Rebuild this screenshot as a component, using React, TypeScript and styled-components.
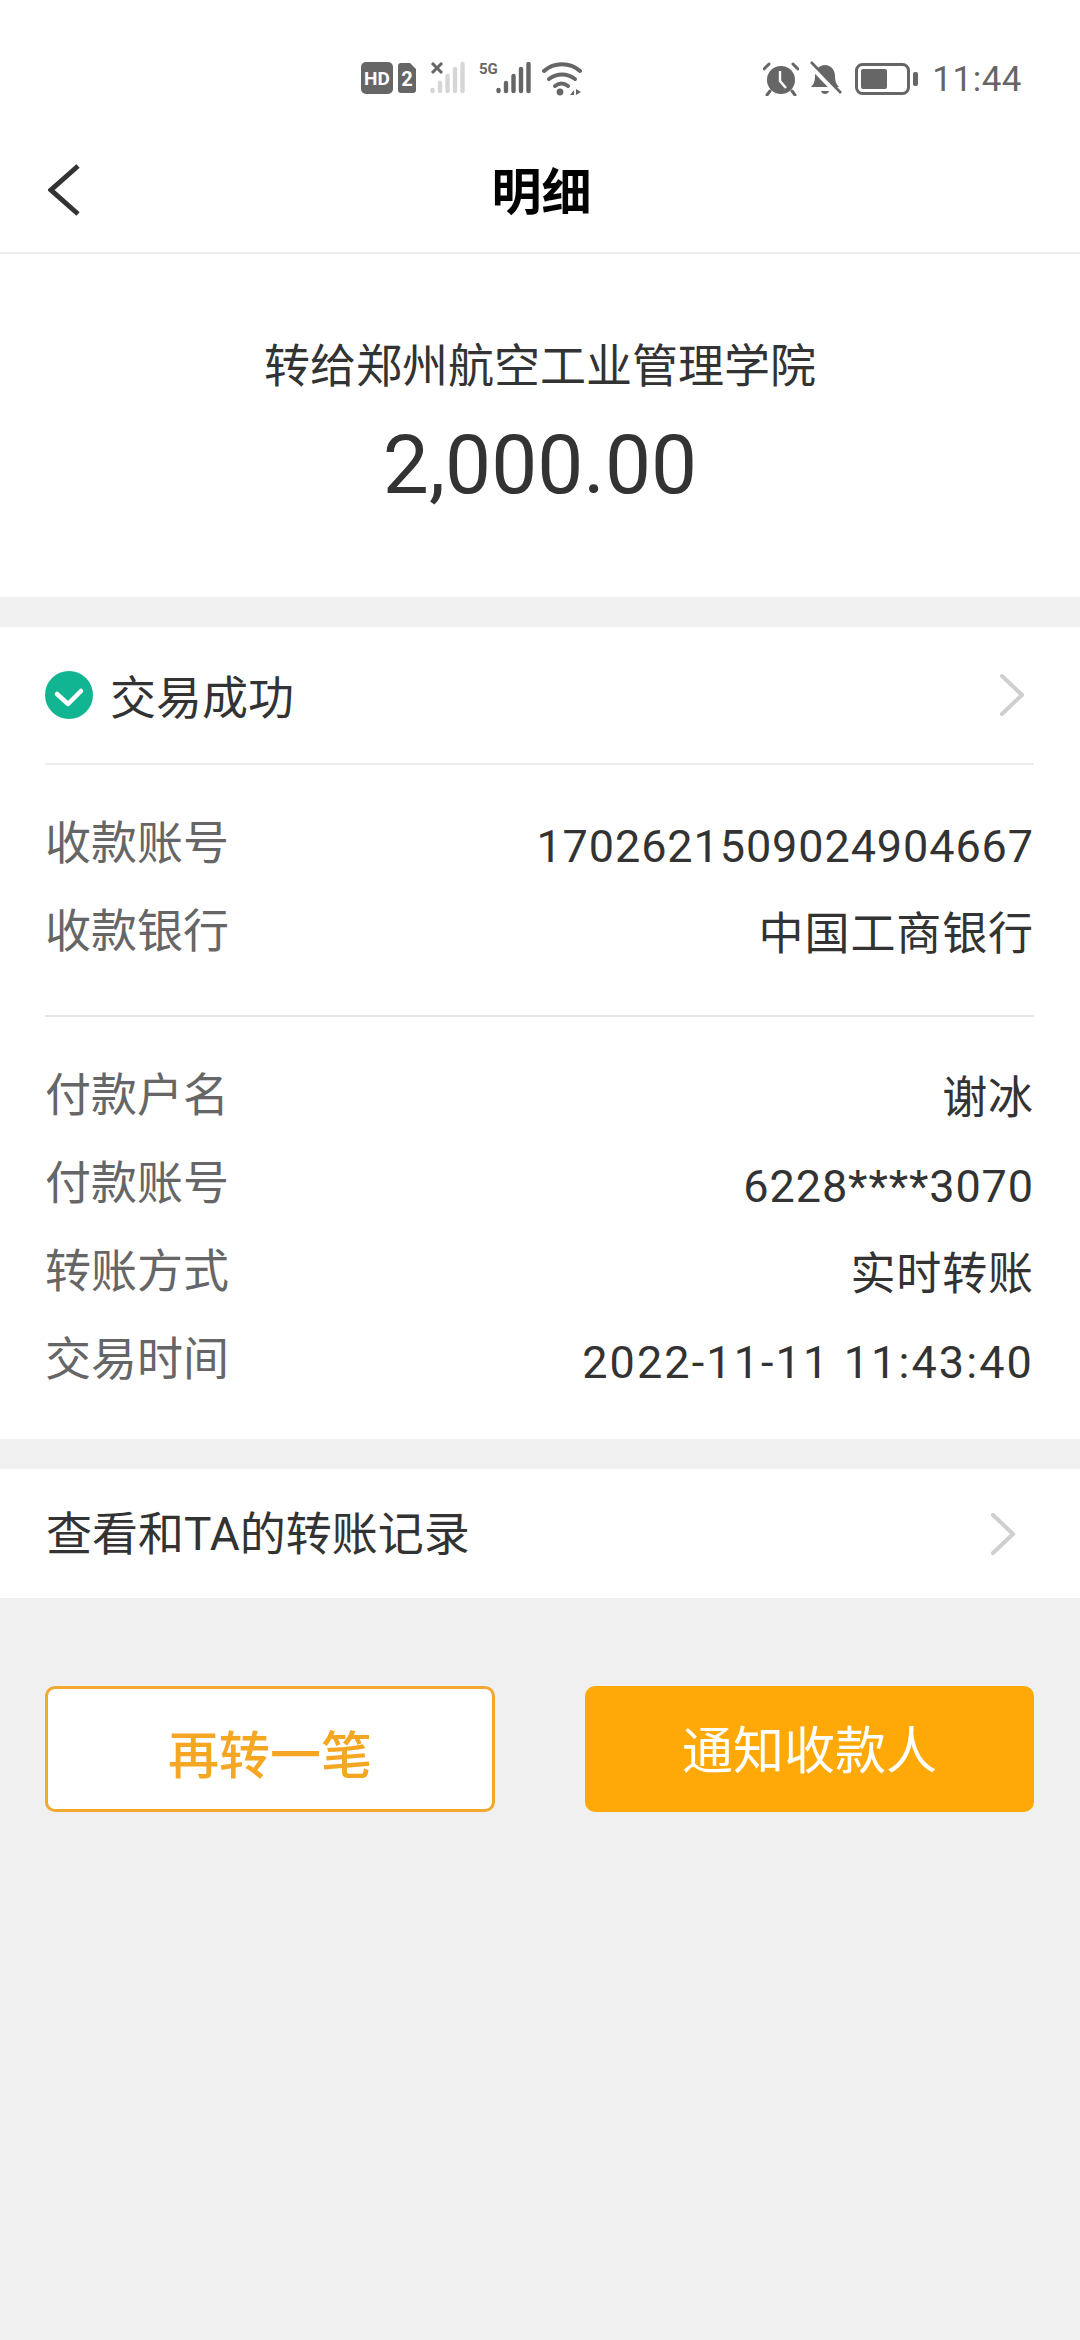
import { FC } from 'react';
import styled, { createGlobalStyle } from 'styled-components';

const GlobalStyle = createGlobalStyle`
  html, body {
    margin: 0;
    padding: 0;
    background: #f0f0f0;
  }
  body {
    font-family: Roboto, "Noto Sans CJK SC", sans-serif;
  }
`;

const Page = styled.div`
  width: 1080px;
  height: 2340px;
  overflow: hidden;
  background: #f0f0f0;
  color: #333;
`;
const StatusBar = styled.div`
  height: 134px;
  box-sizing: border-box;
  padding: 62px 58px 0 361px;
  background: #fff;
  display: flex;
  justify-content: space-between;
  align-items: flex-start;
`;
const StatusLeft = styled.div`
  display: flex;
  align-items: flex-start;
  gap: 13px;
  height: 34px;
`;
const Signal = styled.div<{ $width: number }>`
  position: relative;
  width: ${(p) => p.$width}px;
  height: 32px;
  display: flex;
  justify-content: flex-end;
`;
const SignalMark = styled.span`
  position: absolute;
  left: 1px;
  top: 0;
  font-size: 15px;
  line-height: 15px;
  font-weight: 700;
  color: #666;
`;
const SignalOverlay = styled.div`
  position: absolute;
  inset: 0;
  display: flex;
`;
const WifiSlot = styled.div`
  margin-left: -2px;
  display: flex;
`;
const StatusRight = styled.div`
  display: flex;
  align-items: center;
  height: 34px;
`;
const BellSlot = styled.div`
  margin: 0 13px 0 9px;
  display: flex;
`;
const Clock = styled.span`
  margin-left: 13px;
  font-size: 35px;
  letter-spacing: 0.5px;
  color: #666;
`;
const NavBar = styled.div`
  position: relative;
  height: 120px;
  background: #fff;
  border-bottom: 2px solid #ececec;
  box-sizing: border-box;
  display: flex;
  align-items: center;
  justify-content: center;
`;
const BackIcon = styled.div`
  position: absolute;
  left: 48px;
  top: 30px;
  display: flex;
`;
const NavTitle = styled.div`
  font-size: 50px;
  font-weight: 700;
  color: #000;
  margin: -10px 0 0 3px;
`;
const Summary = styled.div`
  height: 343px;
  box-sizing: border-box;
  padding-top: 84px;
  background: #fff;
  text-align: center;
  margin-bottom: 30px;
`;
const Payee = styled.div`
  font-size: 46px;
  line-height: 56px;
  color: #333;
`;
const Amount = styled.div`
  font-size: 82px;
  line-height: 96px;
  margin-top: 23px;
  color: #333;
`;
const Card = styled.div`
  height: 812px;
  box-sizing: border-box;
  padding: 0 46px 0 45px;
  background: #fff;
  margin-bottom: 30px;
`;
const StatusRow = styled.div`
  height: 138px;
  box-sizing: border-box;
  border-bottom: 2px solid #ececec;
  display: flex;
  align-items: center;
  justify-content: space-between;
  padding: 0 9px 0 0;
`;
const StatusName = styled.div`
  display: flex;
  align-items: center;
  gap: 17px;
  font-size: 46px;
  color: #333;
`;
const StatusText = styled.span`
  margin-top: -2px;
`;
const Rows = styled.div`
  padding: 38px 0 36px;
  display: flex;
  flex-direction: column;
`;
const Row = styled.div`
  height: 88px;
  display: flex;
  align-items: center;
  justify-content: space-between;
`;
const Label = styled.span`
  font-size: 46px;
  line-height: 60px;
  color: #666;
  margin-top: -8px;
`;
const Value = styled.span`
  font-size: 45px;
  line-height: 60px;
  letter-spacing: 0.9px;
  color: #333;
`;
const TimeValue = styled(Value)`
  letter-spacing: 2.1px;
`;
const Divider = styled.div`
  height: 2px;
  background: #e6e6e6;
`;
const RecordRow = styled.div`
  height: 129px;
  box-sizing: border-box;
  padding: 0 64px 0 46px;
  background: #fff;
  display: flex;
  align-items: center;
  justify-content: space-between;
  font-size: 46px;
  color: #333;
`;
const RecordText = styled.span`
  margin-top: -7px;
`;
const Actions = styled.div`
  padding: 88px 46px 0 45px;
  display: flex;
  justify-content: space-between;
`;
const GhostButton = styled.div`
  width: 450px;
  height: 126px;
  box-sizing: border-box;
  border: 3px solid #f2a72e;
  border-radius: 10px;
  background: #fff;
  color: #f5a623;
  font-size: 51px;
  font-weight: 500;
  padding-top: 6px;
  display: flex;
  align-items: center;
  justify-content: center;
`;
const PrimaryButton = styled.div`
  width: 449px;
  height: 126px;
  box-sizing: border-box;
  border-radius: 10px;
  background: #ffa908;
  color: #fff;
  font-size: 51px;
  padding-bottom: 4px;
  display: flex;
  align-items: center;
  justify-content: center;
`;

const receiverRows = [
  { label: '收款账号', value: '1702621509024904667' },
  { label: '收款银行', value: '中国工商银行' },
];

const payerRows = [
  { label: '付款户名', value: '谢冰' },
  { label: '付款账号', value: '6228****3070' },
  { label: '转账方式', value: '实时转账' },
  { label: '交易时间', value: '2022-11-11 11:43:40', isTime: true },
];

const Bars: FC<{ color: string }> = ({ color }) => (
  <svg width="35" height="32" viewBox="0 0 35 32" fill="none" stroke={color} strokeWidth="4.4" strokeLinecap="round">
    <path d="M2.5 28v1M10 21v8M17.5 14v15M25 7v22M32.5 2v27" />
  </svg>
);

const StatusIconsLeft = () => (
  <StatusLeft>
    <svg width="56" height="32" viewBox="0 0 56 32">
      <rect x="0" y="0" width="32" height="32" rx="5" fill="#666" />
      <text x="16" y="22.5" textAnchor="middle" fontSize="19" fontWeight="700" fontFamily="Roboto" fill="#fff">HD</text>
      <path d="M37 4a3 3 0 0 1 3-3h9l6 6v21a3 3 0 0 1-3 3H40a3 3 0 0 1-3-3z" fill="#666" />
      <text x="46" y="24" textAnchor="middle" fontSize="20" fontWeight="700" fontFamily="Roboto" fill="#fff">2</text>
    </svg>
    <Signal $width={35}>
      <SignalOverlay>
        <Bars color="#d6d6d6" />
      </SignalOverlay>
      <SignalOverlay>
        <svg width="35" height="32" viewBox="0 0 35 32" fill="none">
          <path d="M2 1l10 10M12 1L2 11" stroke="#666" strokeWidth="3" />
        </svg>
      </SignalOverlay>
    </Signal>
    <Signal $width={53}>
      <SignalMark>5G</SignalMark>
      <Bars color="#666" />
    </Signal>
    <WifiSlot>
      <svg width="40" height="34" viewBox="0 0 40 34" fill="none" stroke="#666" strokeWidth="4" strokeLinecap="round">
        <path d="M2 9C12 0 28 0 38 9" />
        <path d="M7 17c8-6 18-6 26 0" />
        <path d="M13 24c4-3 9-3 13 0" />
        <circle cx="18" cy="30" r="3.4" fill="#666" stroke="none" />
        <path d="M28 33l4-5v5zM34 27v6l5-3z" fill="#666" stroke="none" />
      </svg>
    </WifiSlot>
  </StatusLeft>
);

const StatusIconsRight = () => (
  <StatusRight>
    <svg width="36" height="34" viewBox="0 0 36 34">
      <circle cx="18" cy="18" r="14" fill="#666" />
      <path d="M17 9v10l6 7" fill="none" stroke="#fff" strokeWidth="2.4" />
      <path d="M1 7l5-5M35 7l-5-5M7 29l-3 4M29 29l3 4" stroke="#666" strokeWidth="3" strokeLinecap="round" />
    </svg>
    <BellSlot>
      <svg width="34" height="36" viewBox="0 0 34 36">
        <path d="M3 26c3-3 4-6 4-11 0-6 4-11 10-11s10 5 10 11c0 5 1 8 4 11z" fill="#666" />
        <path d="M13 30h8c-1 4-7 4-8 0z" fill="#666" />
        <path d="M1 3l30 31" stroke="#fff" strokeWidth="5" />
        <path d="M3 1l30 31" stroke="#666" strokeWidth="2.6" />
      </svg>
    </BellSlot>
    <svg width="64" height="32" viewBox="0 0 64 32">
      <rect x="1.5" y="1.5" width="52" height="29" rx="6" fill="none" stroke="#666" strokeWidth="3" />
      <rect x="6" y="6" width="26" height="20" rx="2" fill="#666" />
      <rect x="58" y="9" width="5" height="14" rx="2" fill="#666" />
    </svg>
    <Clock>11:44</Clock>
  </StatusRight>
);

const Chevron = () => (
  <svg width="26" height="42" viewBox="0 0 26 42" fill="none" stroke="#cfcfcf" strokeWidth="4" strokeLinecap="round" strokeLinejoin="round">
    <path d="M3 2l20 19L3 40" />
  </svg>
);

const DetailRows: FC<{ rows: { label: string; value: string; isTime?: boolean }[] }> = ({ rows }) => (
  <Rows>
    {rows.map((row) => (
      <Row key={row.label}>
        <Label>{row.label}</Label>
        {row.isTime ? <TimeValue>{row.value}</TimeValue> : <Value>{row.value}</Value>}
      </Row>
    ))}
  </Rows>
);

export default function App() {
  return (
    <Page>
      <GlobalStyle />
      <StatusBar>
        <StatusIconsLeft />
        <StatusIconsRight />
      </StatusBar>
      <NavBar>
        <BackIcon>
          <svg width="32" height="54" viewBox="0 0 32 54" fill="none" stroke="#333" strokeWidth="5">
            <path d="M30 2L3 26l27 24" />
          </svg>
        </BackIcon>
        <NavTitle>明细</NavTitle>
      </NavBar>

      <Summary>
        <Payee>转给郑州航空工业管理学院</Payee>
        <Amount>2,000.00</Amount>
      </Summary>

      <Card>
        <StatusRow>
          <StatusName>
            <svg width="48" height="48" viewBox="0 0 48 48">
              <circle cx="24" cy="24" r="24" fill="#12b591" />
              <path d="M12 23l11 10 13-13" fill="none" stroke="#fff" strokeWidth="4.5" strokeLinecap="round" strokeLinejoin="round" />
            </svg>
            <StatusText>交易成功</StatusText>
          </StatusName>
          <Chevron />
        </StatusRow>
        <DetailRows rows={receiverRows} />
        <Divider />
        <DetailRows rows={payerRows} />
      </Card>

      <RecordRow>
        <RecordText>查看和TA的转账记录</RecordText>
        <Chevron />
      </RecordRow>

      <Actions>
        <GhostButton>再转一笔</GhostButton>
        <PrimaryButton>通知收款人</PrimaryButton>
      </Actions>
    </Page>
  );
}
